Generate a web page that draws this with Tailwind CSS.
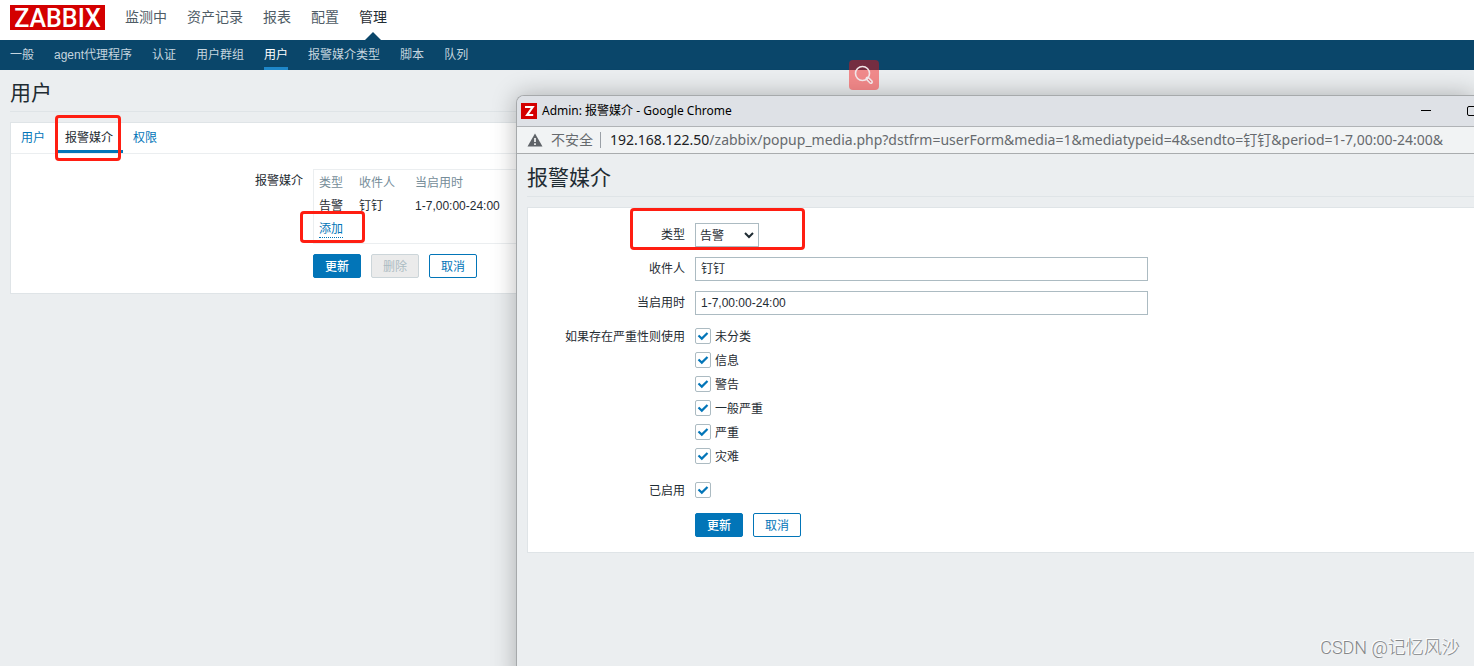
<!DOCTYPE html>
<html lang="zh-CN">
<head>
<meta charset="utf-8">
<title>Zabbix - 用户</title>
<script src="https://cdn.jsdelivr.net/npm/@tailwindcss/browser@4"></script>
</head>
<body class="relative h-screen overflow-hidden bg-[#ebeef0] font-['Liberation_Sans','Noto_Sans_CJK_SC',sans-serif] text-xs text-[#1f2c33]">

<!-- Main navigation -->
<header class="flex h-10 items-start gap-5 bg-white px-2.5 pt-[5px]">
  <a href="#" class="flex h-[25px] w-[95px] items-center justify-center bg-[#d40000] pt-0.5 font-['Roboto',sans-serif] text-[25px] leading-[25px] font-medium text-white">ZABBIX</a>
  <nav class="flex gap-5 text-sm leading-[25px] text-[#4f5c66]">
    <a href="#">监测中</a>
    <a href="#">资产记录</a>
    <a href="#">报表</a>
    <a href="#">配置</a>
    <a href="#" class="relative text-[#1f2c33]">管理
      <svg class="absolute top-[27px] left-1/2 -translate-x-1/2" width="16" height="8" viewBox="0 0 16 8"><path d="M0 8L8 0L16 8Z" fill="#0a466a"/></svg>
    </a>
  </nav>
</header>
<nav class="flex h-[30px] gap-5 bg-[#0a466a] px-2.5 leading-[30px] text-[#c5d5df]">
  <a href="#">一般</a>
  <a href="#">agent代理程序</a>
  <a href="#">认证</a>
  <a href="#">用户群组</a>
  <a href="#" class="border-b-3 border-[#1e87c9] leading-[30px] text-white">用户</a>
  <a href="#">报警媒介类型</a>
  <a href="#">脚本</a>
  <a href="#">队列</a>
</nav>

<!-- User form -->
<main class="px-2.5">
  <h1 class="h-[42px] border-b border-[#dfe4e7] pt-[9px] text-[21px] leading-7">用户</h1>
  <section class="mt-2.5 border border-[#dfe4e7] bg-white">
    <div class="flex h-[31px] border-b border-[#ebeef0] leading-[30px] text-[#0275b8]">
      <a href="#" class="px-2.5">用户</a>
      <a href="#" class="border-b-3 border-[#0275b8] px-2.5 leading-[30px] text-[#1f2c33]">报警媒介</a>
      <a href="#" class="px-2.5">权限</a>
    </div>
    <form class="pt-[15px] pb-[15px]">
      <div class="flex gap-2.5">
        <div class="w-[292px] pt-0.5 text-right leading-5">报警媒介</div>
        <div class="w-96 border border-[#ebeef0] pt-0.5 pb-0.5 pl-[5px]">
          <table class="leading-[23px]">
            <thead>
              <tr class="text-left text-[#768d99]"><th class="pr-4 font-normal">类型</th><th class="pr-5 font-normal">收件人</th><th class="font-normal">当启用时</th></tr>
            </thead>
            <tbody>
              <tr><td>告警</td><td>钉钉</td><td>1-7,00:00-24:00</td></tr>
              <tr><td colspan="3"><button type="button" class="border-b border-dotted border-[#0275b8] leading-4 text-[#0275b8]">添加</button></td></tr>
            </tbody>
          </table>
        </div>
      </div>
      <div class="mt-2.5 ml-[302px] flex gap-2.5">
        <button type="button" class="h-6 w-12 rounded-xs border border-[#0275b8] bg-[#0275b8] pt-0.5 leading-5 font-medium text-white">更新</button>
        <button type="button" disabled class="h-6 w-12 rounded-xs border border-[#ccd5d9] bg-[#ebebeb] pt-0.5 leading-5 text-[#acbbc2]">删除</button>
        <button type="button" class="h-6 w-12 rounded-xs border border-[#0275b8] bg-white pt-0.5 leading-5 text-[#0275b8]">取消</button>
      </div>
    </form>
  </section>
</main>

<!-- Media popup window -->
<section class="absolute top-[95px] right-0 -bottom-5 left-[516px] flex flex-col overflow-hidden rounded-tl-lg border-t border-l border-[#a6a9ab] bg-[#ebeef0] shadow-[0_0_24px_rgba(0,0,0,0.28)]">
  <div class="flex h-[31px] items-center border-b border-[#b0b3b6] bg-[#dee1e6] pl-1 font-['Noto_Sans','Noto_Sans_CJK_SC',sans-serif] text-black">
    <svg width="16" height="16" viewBox="0 0 16 16" class="mr-[5px]"><path d="M0 0H16V16H0Z" fill="#d40000"/><path d="M4 3.9H11.8L6 12.1H12.2" fill="none" stroke="#fff" stroke-width="2"/></svg>
    <span class="flex-1 leading-4">Admin: 报警媒介 - Google Chrome</span>
    <button type="button" aria-label="最小化" class="mr-9"><svg width="10" height="10" viewBox="0 0 10 10"><path d="M0 4.5H10" stroke="#000"/></svg></button>
    <button type="button" aria-label="最大化"><svg width="7" height="10" viewBox="0 0 7 10"><rect x=".5" y=".5" width="9" height="9" rx="1.5" fill="none" stroke="#000"/></svg></button>
  </div>
  <div class="flex h-[27px] shrink-0 items-center overflow-hidden border-b border-[#a9acae] bg-[#f1f3f4] pl-2.5 font-['Noto_Sans','Noto_Sans_CJK_SC',sans-serif] text-sm leading-5 whitespace-nowrap text-[#666a6e]">
    <svg width="16" height="14" viewBox="0 0 16 14" class="mr-2 shrink-0"><path d="M8 .5L15.5 13.5H.5Z" fill="#5f6368"/><path d="M8 5V9M8 10.3V12" stroke="#fff" stroke-width="1.6"/></svg>
    <span>不安全</span>
    <span class="mr-[9px] ml-[7px] h-4 w-px shrink-0 bg-[#9aa0a6]"></span>
    <span><span class="text-[#202124]">192.168.122.50</span>/zabbix/popup_media.php?dstfrm=userForm&amp;media=1&amp;mediatypeid=4&amp;sendto=钉钉&amp;period=1-7,00:00-24:00&amp;</span>
  </div>
  <div class="pl-2.5">
    <h2 class="h-[43px] border-b border-[#dfe4e7] pt-2.5 text-[21px] leading-7">报警媒介</h2>
    <form class="mt-2.5 flex flex-col gap-2.5 border border-r-0 border-[#dfe4e7] bg-white py-[15px] leading-6">
      <div class="flex gap-2.5">
        <label for="type" class="w-[157px] text-right">类型</label>
        <div class="relative h-6 w-16">
          <select id="type" class="block h-6 w-16 appearance-none border border-[#acbbc2] bg-white pl-1"><option>告警</option></select>
          <svg class="pointer-events-none absolute top-[9px] right-[5px]" width="10" height="7" viewBox="0 0 10 7"><path d="M1 1L5 5L9 1" fill="none" stroke="#1f2c33" stroke-width="2"/></svg>
        </div>
      </div>
      <div class="flex gap-2.5">
        <label for="sendto" class="w-[157px] text-right">收件人</label>
        <input id="sendto" value="钉钉" class="h-6 w-[453px] border border-[#acbbc2] bg-white px-[5px]">
      </div>
      <div class="flex gap-2.5">
        <label for="period" class="w-[157px] text-right">当启用时</label>
        <input id="period" value="1-7,00:00-24:00" class="h-6 w-[453px] border border-[#acbbc2] bg-white px-[5px]">
      </div>
      <div class="flex gap-2.5">
        <div class="w-[157px] text-right">如果存在严重性则使用</div>
        <div class="flex flex-col">
          <label class="flex items-start gap-1"><span class="grid pt-[3px]"><input type="checkbox" checked class="col-start-1 row-start-1 size-4 appearance-none rounded-xs border border-[#acbbc2] bg-white"><svg class="pointer-events-none col-start-1 row-start-1" width="16" height="16" viewBox="0 0 16 16"><path d="M3.5 7.5L6.8 10.6L12.5 5" fill="none" stroke="#0275b8" stroke-width="2.2"/></svg></span>未分类</label>
          <label class="flex items-start gap-1"><span class="grid pt-[3px]"><input type="checkbox" checked class="col-start-1 row-start-1 size-4 appearance-none rounded-xs border border-[#acbbc2] bg-white"><svg class="pointer-events-none col-start-1 row-start-1" width="16" height="16" viewBox="0 0 16 16"><path d="M3.5 7.5L6.8 10.6L12.5 5" fill="none" stroke="#0275b8" stroke-width="2.2"/></svg></span>信息</label>
          <label class="flex items-start gap-1"><span class="grid pt-[3px]"><input type="checkbox" checked class="col-start-1 row-start-1 size-4 appearance-none rounded-xs border border-[#acbbc2] bg-white"><svg class="pointer-events-none col-start-1 row-start-1" width="16" height="16" viewBox="0 0 16 16"><path d="M3.5 7.5L6.8 10.6L12.5 5" fill="none" stroke="#0275b8" stroke-width="2.2"/></svg></span>警告</label>
          <label class="flex items-start gap-1"><span class="grid pt-[3px]"><input type="checkbox" checked class="col-start-1 row-start-1 size-4 appearance-none rounded-xs border border-[#acbbc2] bg-white"><svg class="pointer-events-none col-start-1 row-start-1" width="16" height="16" viewBox="0 0 16 16"><path d="M3.5 7.5L6.8 10.6L12.5 5" fill="none" stroke="#0275b8" stroke-width="2.2"/></svg></span>一般严重</label>
          <label class="flex items-start gap-1"><span class="grid pt-[3px]"><input type="checkbox" checked class="col-start-1 row-start-1 size-4 appearance-none rounded-xs border border-[#acbbc2] bg-white"><svg class="pointer-events-none col-start-1 row-start-1" width="16" height="16" viewBox="0 0 16 16"><path d="M3.5 7.5L6.8 10.6L12.5 5" fill="none" stroke="#0275b8" stroke-width="2.2"/></svg></span>严重</label>
          <label class="flex items-start gap-1"><span class="grid pt-[3px]"><input type="checkbox" checked class="col-start-1 row-start-1 size-4 appearance-none rounded-xs border border-[#acbbc2] bg-white"><svg class="pointer-events-none col-start-1 row-start-1" width="16" height="16" viewBox="0 0 16 16"><path d="M3.5 7.5L6.8 10.6L12.5 5" fill="none" stroke="#0275b8" stroke-width="2.2"/></svg></span>灾难</label>
        </div>
      </div>
      <div class="flex items-start gap-2.5">
        <label for="enabled" class="w-[157px] text-right">已启用</label>
        <span class="grid pt-[3px]"><input id="enabled" type="checkbox" checked class="col-start-1 row-start-1 size-4 appearance-none rounded-xs border border-[#acbbc2] bg-white"><svg class="pointer-events-none col-start-1 row-start-1" width="16" height="16" viewBox="0 0 16 16"><path d="M3.5 7.5L6.8 10.6L12.5 5" fill="none" stroke="#0275b8" stroke-width="2.2"/></svg></span>
      </div>
      <div class="ml-[167px] flex gap-2.5">
        <button type="button" class="h-6 w-12 rounded-xs border border-[#0275b8] bg-[#0275b8] pt-0.5 leading-5 font-medium text-white">更新</button>
        <button type="button" class="h-6 w-12 rounded-xs border border-[#0275b8] bg-white pt-0.5 leading-5 text-[#0275b8]">取消</button>
      </div>
    </form>
  </div>
</section>

<!-- Floating search button -->
<button type="button" aria-label="搜索" class="absolute top-[60px] left-[849px] flex size-[30px] items-center justify-center rounded-sm bg-[#f60f10]/45">
  <svg width="20" height="20" viewBox="0 0 20 20" fill="none" stroke="#f1e6e8" stroke-linecap="round"><circle cx="8.5" cy="8.5" r="7" stroke-width="1.6"/><path d="M13.5 13.5L17 17" stroke-width="4"/><path d="M14.4 14.4L16.8 16.8" stroke="#dc7479" stroke-width="1.2"/></svg>
</button>

<!-- Highlight frames -->
<div class="pointer-events-none absolute top-[115px] left-[55px] h-[46px] w-[66px] rounded-sm border-3 border-[#ff1e12]"></div>
<div class="pointer-events-none absolute top-[211px] left-[300px] h-8 w-[65px] rounded-sm border-3 border-[#ff1e12]"></div>
<div class="pointer-events-none absolute top-[208px] left-[630px] h-[42px] w-[175px] rounded-sm border-3 border-[#ff1e12]"></div>

<p class="absolute right-[14px] bottom-1.5 font-['Roboto','Noto_Sans_CJK_SC',sans-serif] text-lg leading-6 font-light text-[#858789] [text-shadow:-1px_-1px_0_#ffffff]">CSDN @记忆风沙</p>
</body>
</html>
